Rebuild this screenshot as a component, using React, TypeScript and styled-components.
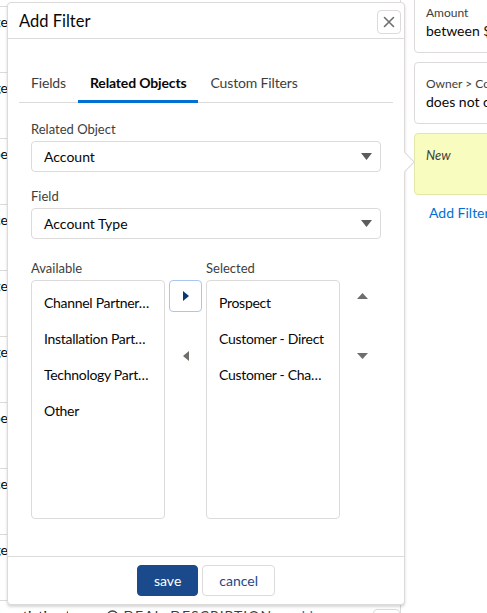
import styled, { createGlobalStyle } from "styled-components";

const GlobalStyle = createGlobalStyle`
  html, body {
    margin: 0;
    padding: 0;
    background: #fff;
  }
  body {
    font-family: "Lato", "Noto Sans", sans-serif;
    color: #080707;
  }
  * {
    box-sizing: border-box;
  }
`;

const Page = styled.div`
  position: relative;
  width: 487px;
  height: 613px;
  overflow: hidden;
  display: flex;
  align-items: flex-start;
`;

/* background table (mostly hidden under the modal) */
const Table = styled.div`
  width: 401px;
  flex-shrink: 0;
  padding-top: 6px;
  border-right: 1px solid #dddbda;
`;

const Row = styled.div`
  height: 66px;
  border-top: 1px solid #dddbda;
  display: flex;
  align-items: flex-start;
  padding-top: 5px;
  font-size: 14px;
  line-height: 20px;
  white-space: nowrap;
`;

const EndCell = styled.div`
  width: 80px;
  margin-left: -72px;
  text-align: right;
`;

const NameCell = styled.div`
  width: 90px;
  margin-left: -10px;
  overflow: hidden;
`;

const FieldCell = styled.div`
  margin-left: 38px;
  display: flex;
  align-items: center;
  gap: 4px;
  letter-spacing: 1px;
  color: #3e3e3c;
`;

const AddLink = styled.span`
  margin-left: 18px;
  color: #0070d2;
`;

const SmallBox = styled.div`
  margin-left: 60px;
  margin-top: 3px;
  width: 31px;
  height: 28px;
  border: 1px solid #dddbda;
  border-radius: 4px;
`;

/* right side filter cards */
const Side = styled.div`
  margin-left: 13px;
  margin-top: -9px;
  width: 110px;
  flex-shrink: 0;
  display: flex;
  flex-direction: column;
  gap: 9px;
`;

const FilterCard = styled.div<{ $draft?: boolean }>`
  height: 62px;
  border: 1px solid ${(p) => (p.$draft ? "#e3e6a8" : "#dddbda")};
  border-radius: 4px;
  background: ${(p) => (p.$draft ? "#f8fcbf" : "#fff")};
  padding: 12px 11px 0;
  white-space: nowrap;
`;

const CardLabel = styled.div`
  font-size: 12px;
  line-height: 18px;
  color: #3e3e3c;
`;

const CardValue = styled.div`
  font-size: 14px;
  line-height: 18px;
  color: #080707;
`;

const DraftText = styled.div`
  font-size: 13px;
  line-height: 18px;
  font-style: italic;
  color: #3e3e3c;
`;

const SideLink = styled.a`
  display: block;
  padding-left: 15px;
  font-size: 14px;
  line-height: 18px;
  color: #0070d2;
  text-decoration: none;
  white-space: nowrap;
`;

/* modal */
const Modal = styled.section`
  position: absolute;
  left: 7px;
  top: 2px;
  width: 398px;
  height: 603px;
  background: #fff;
  border: 1px solid #dddbda;
  border-radius: 4px;
  box-shadow: 0 2px 3px rgba(0, 0, 0, 0.16);
  display: flex;
  flex-direction: column;
`;

const Nubbin = styled.div`
  position: absolute;
  right: -8px;
  top: 152px;
  width: 14px;
  height: 14px;
  background: #fff;
  border-top: 1px solid #dddbda;
  border-right: 1px solid #dddbda;
  transform: rotate(45deg);
  z-index: 1;
`;

const Header = styled.header`
  height: 36px;
  flex-shrink: 0;
  border-bottom: 1px solid #dddbda;
  display: flex;
  align-items: center;
  justify-content: space-between;
  padding: 0 3px 0 11px;
`;

const Title = styled.h2`
  margin: 0;
  font-size: 16.5px;
  font-weight: 400;
  line-height: 24px;
  color: #080707;
`;

const CloseButton = styled.button`
  width: 24px;
  height: 24px;
  margin-top: 2px;
  padding: 0;
  border: 1px solid #dddbda;
  border-radius: 4px;
  background: #fff;
  display: flex;
  align-items: center;
  justify-content: center;
`;

const Body = styled.div`
  flex: 1;
  padding: 23px 11px 0;
`;

const TabBar = styled.div`
  display: flex;
  border-bottom: 1px solid #dddbda;
`;

const Tab = styled.div<{ $active?: boolean }>`
  height: 41px;
  margin-bottom: -1px;
  padding: 3px 12px 0;
  display: flex;
  align-items: center;
  font-size: 14px;
  letter-spacing: -0.15px;
  font-weight: ${(p) => (p.$active ? 700 : 400)};
  color: ${(p) => (p.$active ? "#080707" : "#3e3e3c")};
  border-bottom: 3px solid ${(p) => (p.$active ? "#0070d2" : "transparent")};
`;

const Panel = styled.div`
  padding: 17px 12px 0;
`;

const Label = styled.div`
  font-size: 13px;
  line-height: 18px;
  color: #3e3e3c;
  margin-bottom: 3px;
`;

const Select = styled.div`
  height: 31px;
  border: 1px solid #dddbda;
  border-radius: 4px;
  padding: 0 8px 0 12px;
  display: flex;
  align-items: center;
  justify-content: space-between;
  font-size: 14px;
  color: #080707;
  margin-bottom: 15px;
`;

const Dual = styled.div`
  display: flex;
  align-items: flex-start;
  padding-top: 5px;
`;

const ListColumn = styled.div`
  width: 134px;
`;

const ListBox = styled.ul`
  margin: 0;
  padding: 4px 0;
  list-style: none;
  height: 239px;
  border: 1px solid #dddbda;
  border-radius: 4px;
`;

const Option = styled.li`
  height: 36px;
  line-height: 36px;
  padding: 0 13px 0 12px;
  font-size: 14px;
  letter-spacing: -0.3px;
  color: #080707;
  white-space: nowrap;
  overflow: hidden;
  text-overflow: ellipsis;
`;

const ButtonColumn = styled.div<{ $width: number; $gap: number }>`
  width: ${(p) => p.$width}px;
  margin-left: 4px;
  margin-right: ${(p) => (p.$gap ? 4 : 0)}px;
  padding-top: 21px;
  display: flex;
  flex-direction: column;
  gap: 28px;
`;

const IconButton = styled.button<{ $outlined?: boolean }>`
  width: 100%;
  height: 32px;
  padding: 0;
  border: 1px solid ${(p) => (p.$outlined ? "#a9c7ec" : "transparent")};
  border-radius: 4px;
  background: #fff;
  display: flex;
  align-items: center;
  justify-content: center;
`;

const Footer = styled.footer`
  flex-shrink: 0;
  border-top: 1px solid #dddbda;
  padding: 8px;
  display: flex;
  justify-content: center;
  gap: 4px;
`;

const FooterButton = styled.button<{ $primary?: boolean }>`
  height: 31px;
  padding: 0 16px;
  border-radius: 4px;
  font-family: inherit;
  font-size: 14px;
  border: 1px solid ${(p) => (p.$primary ? "#1a4a8c" : "#dddbda")};
  background: ${(p) => (p.$primary ? "#1a4a8c" : "#fff")};
  color: ${(p) => (p.$primary ? "#fff" : "#18498c")};
`;

const Triangle = ({
  dir,
  color,
  w = 10,
  h = 6,
}: {
  dir: "up" | "down" | "left" | "right";
  color: string;
  w?: number;
  h?: number;
}) => {
  const vertical = dir === "up" || dir === "down";
  const width = vertical ? w : h;
  const height = vertical ? h : w;
  const points = {
    down: `0,0 ${width},0 ${width / 2},${height}`,
    up: `0,${height} ${width},${height} ${width / 2},0`,
    right: `0,0 ${width},${height / 2} 0,${height}`,
    left: `${width},0 0,${height / 2} ${width},${height}`,
  }[dir];
  return (
    <svg width={width} height={height} viewBox={`0 0 ${width} ${height}`}>
      <polygon points={points} fill={color} />
    </svg>
  );
};

const available = [
  "Channel Partner / Reseller",
  "Installation Partner",
  "Technology Partner",
  "Other",
];
const selected = ["Prospect", "Customer - Direct", "Customer - Channel"];
const rowEnds = [
  "Close Date",
  "Stage",
  "Type",
  "Source",
  "Close Date",
  "Stage",
  "Type",
  "Source",
  "Stage",
];

export default function App() {
  return (
    <>
      <GlobalStyle />
      <Page>
        <Table>
          {rowEnds.map((t, i) => (
            <Row key={i}>
              <EndCell>{t}</EndCell>
            </Row>
          ))}
          <Row>
            <NameCell>Negotiation/Review</NameCell>
            <FieldCell>
              <svg width="13" height="13" viewBox="0 0 13 13">
                <circle cx="6.5" cy="6.5" r="5.5" fill="none" stroke="#3e3e3c" strokeWidth="1.3" />
              </svg>
              DEAL_DESCRIPTION
            </FieldCell>
            <AddLink>add</AddLink>
            <SmallBox />
          </Row>
        </Table>

        <Side>
          <FilterCard>
            <CardLabel>Amount</CardLabel>
            <CardValue>between $0 and $100</CardValue>
          </FilterCard>
          <FilterCard>
            <CardLabel>Owner &gt; Country</CardLabel>
            <CardValue>does not contain</CardValue>
          </FilterCard>
          <FilterCard $draft>
            <DraftText>New</DraftText>
          </FilterCard>
          <SideLink href="#">Add Filter</SideLink>
        </Side>

        <Modal>
          <Nubbin />
          <Header>
            <Title>Add Filter</Title>
            <CloseButton aria-label="Close">
              <svg width="12" height="12" viewBox="0 0 12 12">
                <path d="M1.5 1.5 L10.5 10.5 M10.5 1.5 L1.5 10.5" stroke="#706e6b" strokeWidth="1.6" strokeLinecap="round" />
              </svg>
            </CloseButton>
          </Header>
          <Body>
            <TabBar>
              <Tab>Fields</Tab>
              <Tab $active>Related Objects</Tab>
              <Tab>Custom Filters</Tab>
            </TabBar>
            <Panel>
              <Label>Related Object</Label>
              <Select>
                Account
                <Triangle dir="down" color="#5c5c5c" w={11} h={7} />
              </Select>
              <Label>Field</Label>
              <Select>
                Account Type
                <Triangle dir="down" color="#5c5c5c" w={11} h={7} />
              </Select>
              <Dual>
                <ListColumn>
                  <Label>Available</Label>
                  <ListBox>
                    {available.map((o) => (
                      <Option key={o}>{o}</Option>
                    ))}
                  </ListBox>
                </ListColumn>
                <ButtonColumn $width={33} $gap={1}>
                  <IconButton $outlined aria-label="Move to selected">
                    <Triangle dir="right" color="#0b3a72" w={10} h={6} />
                  </IconButton>
                  <IconButton aria-label="Move to available">
                    <Triangle dir="left" color="#706e6b" w={10} h={6} />
                  </IconButton>
                </ButtonColumn>
                <ListColumn>
                  <Label>Selected</Label>
                  <ListBox>
                    {selected.map((o) => (
                      <Option key={o}>{o}</Option>
                    ))}
                  </ListBox>
                </ListColumn>
                <ButtonColumn $width={36} $gap={0}>
                  <IconButton aria-label="Move up">
                    <Triangle dir="up" color="#706e6b" w={11} h={6} />
                  </IconButton>
                  <IconButton aria-label="Move down">
                    <Triangle dir="down" color="#706e6b" w={11} h={6} />
                  </IconButton>
                </ButtonColumn>
              </Dual>
            </Panel>
          </Body>
          <Footer>
            <FooterButton $primary>save</FooterButton>
            <FooterButton>cancel</FooterButton>
          </Footer>
        </Modal>
      </Page>
    </>
  );
}
